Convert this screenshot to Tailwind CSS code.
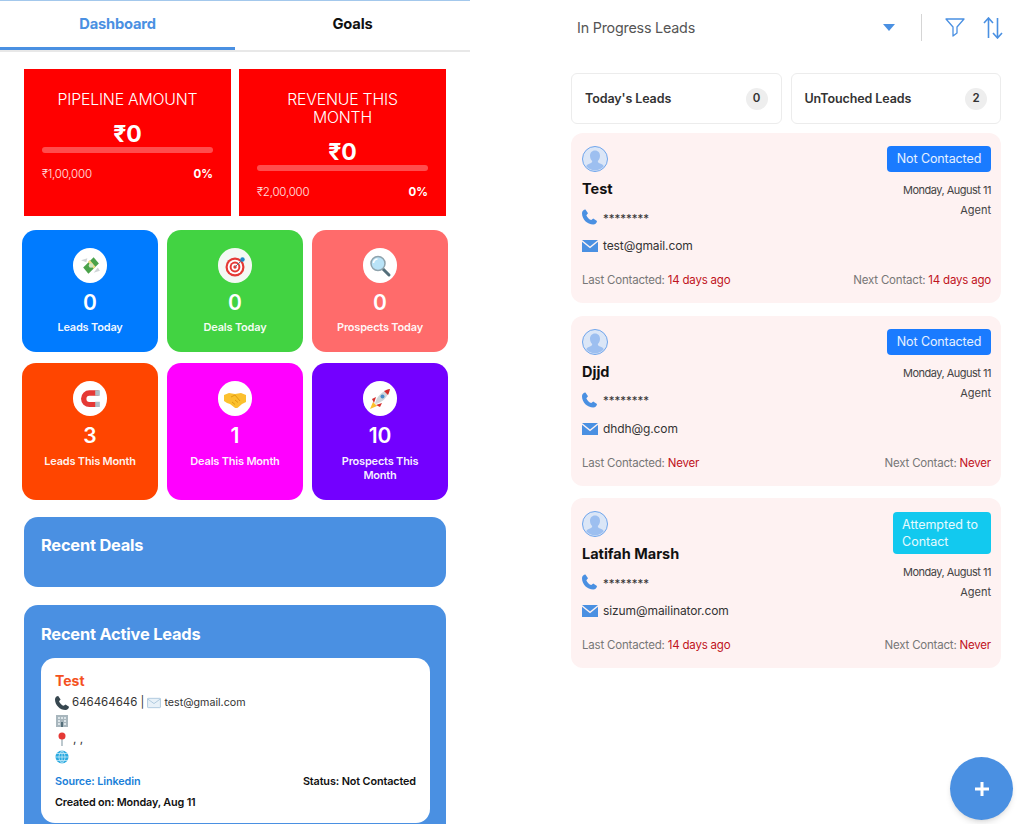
<!DOCTYPE html>
<html lang="en">
<head>
    <meta charset="UTF-8">
    <meta name="viewport" content="width=device-width, initial-scale=1.0">
    <title>Leads Dashboard</title>
    <script src="https://cdn.jsdelivr.net/npm/@tailwindcss/browser@4"></script>
</head>
<body class="bg-white font-['Inter','Liberation_Sans',sans-serif]">
    <div class="relative flex h-[824px] w-[1024px] overflow-hidden">

        <!-- Left: dashboard -->
        <div class="w-[470px] h-[824px] overflow-hidden border-t border-[#a3c8ec]">
            <!-- Tabs -->
            <div class="flex h-[51px] border-b-2 border-[#e8e8e8]">
                <div class="w-[235px] h-[49px] border-b-[3px] border-[#4a90e2] pt-[13px] text-center text-[14.700px] leading-[20px] font-bold tracking-[-0.2px] text-[#4a90e2]">Dashboard</div>
                <div class="flex-1 pt-[13px] text-center text-[14.700px] leading-[20px] font-bold tracking-[-0.2px] text-[#111]">Goals</div>
            </div>

            <!-- Amount cards -->
            <div class="flex gap-2 pl-6 pt-[17px]">
                <div class="w-[207px] h-[147px] bg-[#ff0000] px-[18px] pt-[22px] text-white">
                    <div class="text-center text-[15.800px] leading-[18px] font-light tracking-[-0.2px]">PIPELINE AMOUNT</div>
                    <div class="mt-[12px] text-center text-[23px] leading-[26px] font-bold">₹0</div>
                    <div class="h-[6px] rounded-full bg-white/30"></div>
                    <div class="mt-[14px] flex items-center justify-between text-[11.500px] leading-[14px]">
                        <span class="font-light tracking-[-0.2px] text-white/90">₹1,00,000</span>
                        <span class="font-bold">0%</span>
                    </div>
                </div>
                <div class="w-[207px] h-[147px] bg-[#ff0000] px-[18px] pt-[22px] text-white">
                    <div class="text-center text-[15.800px] leading-[18px] font-light tracking-[-0.2px]">REVENUE THIS<br>MONTH</div>
                    <div class="mt-[12px] text-center text-[23px] leading-[26px] font-bold">₹0</div>
                    <div class="h-[6px] rounded-full bg-white/30"></div>
                    <div class="mt-[14px] flex items-center justify-between text-[11.500px] leading-[14px]">
                        <span class="font-light tracking-[-0.2px] text-white/90">₹2,00,000</span>
                        <span class="font-bold">0%</span>
                    </div>
                </div>
            </div>

            <!-- Stat tiles -->
            <div class="mt-[14px] ml-[22px] grid w-[426px] grid-cols-3 gap-x-[9px] gap-y-[11px] text-center text-white">
                <div class="h-[122px] rounded-[14px] bg-[#007bff] pt-[18px]">
                    <div class="mx-auto flex h-[35px] w-[34px] items-center justify-center rounded-full bg-white">
                        <svg width="23" height="23" viewBox="0 0 22 22"><path d="M2 6l6-2-1 4zM14 18l6-2-2-3z" fill="#cfd4d6"/><path d="M4 13L14 3l5 6L9 19z" fill="#4aa24a"/><path d="M8.500 7.500l5.500 6.500 1.800-1.800-5.500-6.500z" fill="#f0dc8a"/><circle cx="11.500" cy="11" r="2.200" fill="#cfe8c4"/></svg>
                    </div>
                    <div class="mt-[7px] text-[21px] leading-[26px] font-semibold">0</div>
                    <div class="mt-[4px] text-[11px] leading-[14px] font-semibold tracking-[-0.2px] text-white/95">Leads Today</div>
                </div>
                <div class="h-[122px] rounded-[14px] bg-[#42d342] pt-[18px]">
                    <div class="mx-auto flex h-[35px] w-[34px] items-center justify-center rounded-full bg-[#f4f8f4]">
                        <svg width="24" height="24" viewBox="0 0 24 24"><circle cx="12" cy="13" r="9.500" fill="#e53935"/><circle cx="12" cy="13" r="7.300" fill="#fff"/><circle cx="12" cy="13" r="5.400" fill="#e53935"/><circle cx="12" cy="13" r="3.400" fill="#fff"/><circle cx="12" cy="13" r="1.700" fill="#e53935"/><path d="M12 13l7-7" stroke="#607d8b" stroke-width="1"/><circle cx="19.500" cy="5.500" r="2.200" fill="#1e88c9"/></svg>
                    </div>
                    <div class="mt-[7px] text-[21px] leading-[26px] font-semibold">0</div>
                    <div class="mt-[4px] text-[11px] leading-[14px] font-semibold tracking-[-0.2px] text-white/95">Deals Today</div>
                </div>
                <div class="h-[122px] rounded-[14px] bg-[#ff6b6b] pt-[18px]">
                    <div class="mx-auto flex h-[35px] w-[34px] items-center justify-center rounded-full bg-white">
                        <svg width="24" height="24" viewBox="0 0 24 24"><path d="M14 14l7 7" stroke="#546e7a" stroke-width="3" stroke-linecap="round"/><circle cx="10" cy="9.500" r="7" fill="#b9e3f7" stroke="#8fa3ad" stroke-width="1.500"/><path d="M5.500 9a4.500 4.500 0 0 1 4-4" stroke="#fff" stroke-width="1.500" fill="none"/></svg>
                    </div>
                    <div class="mt-[7px] text-[21px] leading-[26px] font-semibold">0</div>
                    <div class="mt-[4px] text-[11px] leading-[14px] font-semibold tracking-[-0.2px] text-white/95">Prospects Today</div>
                </div>
                <div class="h-[137px] rounded-[14px] bg-[#ff4500] pt-[18px]">
                    <div class="mx-auto flex h-[35px] w-[34px] items-center justify-center rounded-full bg-white">
                        <svg width="22" height="20" viewBox="3 4 19 17"><path d="M20 5h-8a7 7 0 0 0 0 14.500h8v-4.500h-8a2.600 2.600 0 0 1 0-5.200h8z" fill="#e53935"/><path d="M17 5h4v4.800h-4zM17 14.900h4v4.600h-4z" fill="#b0bec5"/></svg>
                    </div>
                    <div class="mt-[7px] text-[21px] leading-[26px] font-semibold">3</div>
                    <div class="mt-[5px] text-[11px] leading-[14px] font-semibold tracking-[-0.2px] text-white/95">Leads This Month</div>
                </div>
                <div class="h-[137px] rounded-[14px] bg-[#ff00ff] pt-[18px]">
                    <div class="mx-auto flex h-[35px] w-[34px] items-center justify-center rounded-full bg-white">
                        <svg width="24" height="24" viewBox="0 0 24 24"><path d="M1 8l5-2 6 1 6-1 5 2v7l-4 2-4 3.500c-1 .8-2.500 .8-3.500 0L7 17l-3-1-3-2z" fill="#fbc02d"/><path d="M8 10l4-2 5 6M9 15l3 2.500M12 13l3 2.500" stroke="#e09b12" stroke-width="1" fill="none"/></svg>
                    </div>
                    <div class="mt-[7px] text-[21px] leading-[26px] font-semibold">1</div>
                    <div class="mt-[5px] text-[11px] leading-[14px] font-semibold tracking-[-0.2px] text-white/95">Deals This Month</div>
                </div>
                <div class="h-[137px] rounded-[14px] bg-[#7300ff] pt-[18px]">
                    <div class="mx-auto flex h-[35px] w-[34px] items-center justify-center rounded-full bg-white">
                        <svg width="24" height="24" viewBox="0 0 24 24"><path d="M5 15l-3 7 7-3z" fill="#fbc02d"/><path d="M4 12l4-2-2 6zM12 20l2-4-6 2z" fill="#d32f2f"/><path d="M7 17C8 10 14 4 22 2c-2 8-8 14-15 15z" fill="#cfd8dc"/><path d="M16 4c1.500-.8 4-1.600 6-2-.5 2-1.200 4.500-2 6z" fill="#d32f2f"/><circle cx="14.500" cy="9.500" r="2" fill="#4a8ec9"/></svg>
                    </div>
                    <div class="mt-[7px] text-[21px] leading-[26px] font-semibold">10</div>
                    <div class="mx-auto mt-[5px] w-[100px] text-[11px] leading-[14px] font-semibold tracking-[-0.2px] text-white/95">Prospects This Month</div>
                </div>
            </div>

            <!-- Recent deals -->
            <div class="mt-[17px] ml-6 h-[70px] w-[422px] rounded-[14px] bg-[#4a90e2] px-[17px] pt-[16px] text-[16.400px] leading-[24px] font-bold tracking-[-0.2px] text-white">Recent Deals</div>

            <!-- Recent active leads -->
            <div class="mt-[18px] ml-6 h-[240px] w-[422px] rounded-[14px] bg-[#4a90e2] pl-[17px] pr-[16px] pt-[17px]">
                <div class="text-[16.400px] leading-[24px] font-bold tracking-[-0.2px] text-white">Recent Active Leads</div>
                <div class="mt-[12px] h-[165px] rounded-[14px] bg-white px-[14px] pt-[14px]">
                    <div class="text-[14px] leading-[18px] font-bold text-[#f4511e]">Test</div>
                    <div class="mt-[4px] flex h-[18px] items-center text-[#333]">
                        <svg class="mr-[3px]" width="14" height="14" viewBox="2 2 20 20"><path d="M6.600 2l3.400 5-2.200 2.500c1 2.800 3.800 5.600 6.600 6.600L17 14l5 3.400c0 2.600-2.400 4.600-5 4.600C9 22 2 15 2 7c0-2.600 2-5 4.600-5z" fill="#37474f"/></svg>
                        <span class="text-[11.500px]">646464646 |</span>
                        <svg class="mx-[3px]" width="14" height="12" viewBox="0 0 24 18"><rect x="1" y="1" width="22" height="16" rx="1" fill="#e8f1f8" stroke="#a9c6dc" stroke-width="1.500"/><path d="M1 2l11 8 11-8" fill="none" stroke="#a9c6dc" stroke-width="1.500"/></svg>
                        <span class="text-[10.700px]">test@gmail.com</span>
                    </div>
                    <div class="flex h-[18px] items-center">
                        <svg width="14" height="14" viewBox="0 0 14 14"><rect x="1" y="1" width="12" height="12" fill="#a8b6bd"/><path d="M3 3h2v2H3zM6 3h2v2H6zM9 3h2v2H9zM3 6h2v2H3zM9 6h2v2H9zM3 9h2v2H3zM9 9h2v2H9z" fill="#dbe4e8"/><path d="M6 8h2v5H6z" fill="#546e7a"/></svg>
                    </div>
                    <div class="flex h-[18px] items-center text-[12px] text-[#333]">
                        <svg class="mr-[4px]" width="14" height="14" viewBox="0 0 14 14"><path d="M7 6v8" stroke="#90a4ae" stroke-width="1.200"/><circle cx="7" cy="4" r="3.500" fill="#e53935"/></svg>
                        <span class="leading-none">, ,</span>
                    </div>
                    <div class="flex h-[18px] items-center">
                        <svg width="14" height="14" viewBox="0 0 14 14"><circle cx="7" cy="7" r="6.500" fill="#29a9e0"/><path d="M.5 7h13M2 3.500h10M2 10.500h10M7 .5v13M7 .5c-4 3.500-4 9.500 0 13M7 .5c4 3.500 4 9.500 0 13" stroke="#d7f0fb" stroke-width=".7" fill="none"/></svg>
                    </div>
                    <div class="mt-[7px] flex justify-between text-[10.800px] leading-[18px] font-semibold tracking-[-0.1px]">
                        <span class="text-[#1a7fd9]">Source: Linkedin</span>
                        <span class="text-[#111]">Status: Not Contacted</span>
                    </div>
                    <div class="mt-[3px] text-[10.800px] leading-[18px] font-semibold tracking-[-0.15px] text-[#111]">Created on: Monday, Aug 11</div>
                </div>
            </div>
        </div>

        <!-- Right: leads list -->
        <div class="flex-1 pl-[101px] pr-[23px]">
            <!-- Filter bar -->
            <div class="flex h-[73px] items-start pt-[14px]">
                <div class="flex h-[27px] flex-1 items-center pl-[6px] pr-[26px]">
                    <span class="flex-1 text-[14.300px] tracking-[-0.2px] text-[#555]">In Progress Leads</span>
                    <svg width="12" height="7" viewBox="0 0 12 7"><path d="M0 0h12L6 7z" fill="#4a90e2"/></svg>
                </div>
                <div class="h-[27px] w-px bg-[#d5d5d5]"></div>
                <svg class="ml-[23px] mt-[4px]" width="20" height="19" viewBox="0 0 20 19"><path d="M1 1h18l-7 8v6l-4 3V9z" fill="none" stroke="#4a90e2" stroke-width="1.300" stroke-linejoin="round"/></svg>
                <svg class="ml-[18px] mr-[-2px] mt-[3px]" width="20" height="22" viewBox="0 0 20 22"><path d="M5.500 21V1M1 6l4.500-5L10 6M14.500 1v20M10 16l4.500 5 4.500-5" fill="none" stroke="#4a90e2" stroke-width="1.600"/></svg>
            </div>

            <!-- Counters -->
            <div class="flex gap-[9px]">
                <div class="flex h-[51px] flex-1 items-center justify-between rounded-[6px] border border-[#ececec] pl-[13px] pr-[13px] text-[12.500px] font-semibold tracking-[-0.1px] text-[#333]">
                    <span class="mt-[2px]">Today's Leads</span>
                    <span class="flex h-[22px] w-[22px] items-center justify-center rounded-full bg-[#eeeeee] text-[11.500px]">0</span>
                </div>
                <div class="flex h-[51px] flex-1 items-center justify-between rounded-[6px] border border-[#ececec] pl-[13px] pr-[13px] text-[12.500px] font-semibold tracking-[-0.1px] text-[#333]">
                    <span class="mt-[2px]">UnTouched Leads</span>
                    <span class="flex h-[22px] w-[22px] items-center justify-center rounded-full bg-[#eeeeee] text-[11.500px]">2</span>
                </div>
            </div>

            <!-- Lead cards -->
            <div class="mt-[9px] flex flex-col gap-[12.500px]">
                <div class="flex h-[170px] flex-col rounded-[12px] bg-[#fef2f2] pl-[11px] pr-[10px] pt-[13px] pb-[14px]">
                    <div class="flex flex-1 justify-between">
                        <div>
                            <svg width="26" height="26" viewBox="0 0 26 26"><circle cx="13" cy="13" r="12.500" fill="#dbe6f7" stroke="#6fa5ec"/><path d="M13 4.500c-3.200 0-5 2.400-5 5.300 0 2.100.8 4 2.200 5.200 0 1.300-.6 2-2.200 2.600-1.600.6-3.200 1.200-3.800 2.700a11.500 11.500 0 0 0 17.600 0c-.6-1.500-2.200-2.100-3.800-2.700-1.600-.6-2.200-1.300-2.200-2.600 1.400-1.200 2.200-3.100 2.200-5.200 0-2.900-1.800-5.300-5-5.300z" fill="#9dbff0"/></svg>
                            <div class="mt-[7px] text-[14.500px] leading-[20px] font-bold text-[#111]">Test</div>
                            <div class="mt-[9px] flex h-[18px] items-center">
                                <svg width="15" height="16" viewBox="2 2 20 20"><path d="M6.600 2l3.400 5-2.200 2.500c1 2.800 3.800 5.600 6.600 6.600L17 14l5 3.400c0 2.600-2.400 4.600-5 4.600C9 22 2 15 2 7c0-2.600 2-5 4.600-5z" fill="#4a90e2"/></svg>
                                <span class="ml-[6px] mt-[5px] text-[11.500px] text-[#333]">********</span>
                            </div>
                            <div class="mt-[11px] flex h-[18px] items-center">
                                <svg width="16" height="12" viewBox="0 0 16 12"><path d="M0 0h16L8 6.500zM0 1.800l8 6.500 8-6.500V12H0z" fill="#4a90e2"/></svg>
                                <span class="ml-[5px] text-[12px] tracking-[-0.1px] text-[#333]">test@gmail.com</span>
                            </div>
                        </div>
                        <div class="flex flex-col items-end">
                            <div class="flex h-[26px] w-[104px] items-center justify-center rounded-[4px] bg-[#1a7bff] pt-px text-[12.500px] tracking-[-0.1px] text-white/90">Not Contacted</div>
                            <div class="mt-[9px] text-[11px] leading-[18px] tracking-[-0.5px] text-[#444]">Monday, August 11</div>
                            <div class="mt-[2px] text-[11px] leading-[18px] text-[#444]">Agent</div>
                        </div>
                    </div>
                    <div class="flex justify-between text-[11.500px] leading-[18px] tracking-[-0.2px] text-[#777]">
                        <span>Last Contacted: <span class="text-[#c0131c]">14 days ago</span></span>
                        <span>Next Contact: <span class="text-[#c0131c]">14 days ago</span></span>
                    </div>
                </div>

                <div class="flex h-[170px] flex-col rounded-[12px] bg-[#fef2f2] pl-[11px] pr-[10px] pt-[13px] pb-[14px]">
                    <div class="flex flex-1 justify-between">
                        <div>
                            <svg width="26" height="26" viewBox="0 0 26 26"><circle cx="13" cy="13" r="12.500" fill="#dbe6f7" stroke="#6fa5ec"/><path d="M13 4.500c-3.200 0-5 2.400-5 5.300 0 2.100.8 4 2.200 5.200 0 1.300-.6 2-2.200 2.600-1.600.6-3.200 1.200-3.800 2.700a11.500 11.500 0 0 0 17.600 0c-.6-1.500-2.200-2.100-3.800-2.700-1.600-.6-2.200-1.300-2.200-2.600 1.400-1.200 2.200-3.100 2.200-5.200 0-2.900-1.800-5.300-5-5.300z" fill="#9dbff0"/></svg>
                            <div class="mt-[7px] text-[14.500px] leading-[20px] font-bold text-[#111]">Djjd</div>
                            <div class="mt-[9px] flex h-[18px] items-center">
                                <svg width="15" height="16" viewBox="2 2 20 20"><path d="M6.600 2l3.400 5-2.200 2.500c1 2.800 3.800 5.600 6.600 6.600L17 14l5 3.400c0 2.600-2.400 4.600-5 4.600C9 22 2 15 2 7c0-2.600 2-5 4.600-5z" fill="#4a90e2"/></svg>
                                <span class="ml-[6px] mt-[5px] text-[11.500px] text-[#333]">********</span>
                            </div>
                            <div class="mt-[11px] flex h-[18px] items-center">
                                <svg width="16" height="12" viewBox="0 0 16 12"><path d="M0 0h16L8 6.500zM0 1.800l8 6.500 8-6.500V12H0z" fill="#4a90e2"/></svg>
                                <span class="ml-[5px] text-[12px] tracking-[-0.1px] text-[#333]">dhdh@g.com</span>
                            </div>
                        </div>
                        <div class="flex flex-col items-end">
                            <div class="flex h-[26px] w-[104px] items-center justify-center rounded-[4px] bg-[#1a7bff] pt-px text-[12.500px] tracking-[-0.1px] text-white/90">Not Contacted</div>
                            <div class="mt-[9px] text-[11px] leading-[18px] tracking-[-0.5px] text-[#444]">Monday, August 11</div>
                            <div class="mt-[2px] text-[11px] leading-[18px] text-[#444]">Agent</div>
                        </div>
                    </div>
                    <div class="flex justify-between text-[11.500px] leading-[18px] tracking-[-0.2px] text-[#777]">
                        <span>Last Contacted: <span class="text-[#c0131c]">Never</span></span>
                        <span>Next Contact: <span class="text-[#c0131c]">Never</span></span>
                    </div>
                </div>

                <div class="flex h-[170px] flex-col rounded-[12px] bg-[#fef2f2] pl-[11px] pr-[10px] pt-[13px] pb-[14px]">
                    <div class="flex flex-1 justify-between">
                        <div>
                            <svg width="26" height="26" viewBox="0 0 26 26"><circle cx="13" cy="13" r="12.500" fill="#dbe6f7" stroke="#6fa5ec"/><path d="M13 4.500c-3.200 0-5 2.400-5 5.300 0 2.100.8 4 2.200 5.200 0 1.300-.6 2-2.200 2.600-1.600.6-3.200 1.200-3.800 2.700a11.500 11.500 0 0 0 17.600 0c-.6-1.500-2.200-2.100-3.800-2.700-1.600-.6-2.200-1.300-2.200-2.600 1.400-1.200 2.200-3.100 2.200-5.200 0-2.900-1.800-5.300-5-5.300z" fill="#9dbff0"/></svg>
                            <div class="mt-[7px] text-[14.500px] leading-[20px] font-bold text-[#111]">Latifah Marsh</div>
                            <div class="mt-[9px] flex h-[18px] items-center">
                                <svg width="15" height="16" viewBox="2 2 20 20"><path d="M6.600 2l3.400 5-2.200 2.500c1 2.800 3.800 5.600 6.600 6.600L17 14l5 3.400c0 2.600-2.400 4.600-5 4.600C9 22 2 15 2 7c0-2.600 2-5 4.600-5z" fill="#4a90e2"/></svg>
                                <span class="ml-[6px] mt-[5px] text-[11.500px] text-[#333]">********</span>
                            </div>
                            <div class="mt-[11px] flex h-[18px] items-center">
                                <svg width="16" height="12" viewBox="0 0 16 12"><path d="M0 0h16L8 6.500zM0 1.800l8 6.500 8-6.500V12H0z" fill="#4a90e2"/></svg>
                                <span class="ml-[5px] text-[12px] tracking-[-0.1px] text-[#333]">sizum@mailinator.com</span>
                            </div>
                        </div>
                        <div class="flex flex-col items-end">
                            <div class="mt-px flex h-[42px] w-[98px] items-center rounded-[4px] bg-[#12c9ef] px-[9px] text-[12.500px] leading-[17px] text-white/90">Attempted to Contact</div>
                            <div class="mt-[9px] text-[11px] leading-[18px] tracking-[-0.5px] text-[#444]">Monday, August 11</div>
                            <div class="mt-[2px] text-[11px] leading-[18px] text-[#444]">Agent</div>
                        </div>
                    </div>
                    <div class="flex justify-between text-[11.500px] leading-[18px] tracking-[-0.2px] text-[#777]">
                        <span>Last Contacted: <span class="text-[#c0131c]">14 days ago</span></span>
                        <span>Next Contact: <span class="text-[#c0131c]">Never</span></span>
                    </div>
                </div>
            </div>
        </div>

        <!-- Add button -->
        <div class="absolute left-[950px] top-[757px] flex h-[63px] w-[63px] items-center justify-center rounded-full bg-[#4a90e2] shadow-md">
            <svg width="14" height="14" viewBox="0 0 14 14"><path d="M5.500 0h3v5.500H14v3H8.500V14h-3V8.500H0v-3h5.500z" fill="#fff"/></svg>
        </div>
    </div>
</body>
</html>
